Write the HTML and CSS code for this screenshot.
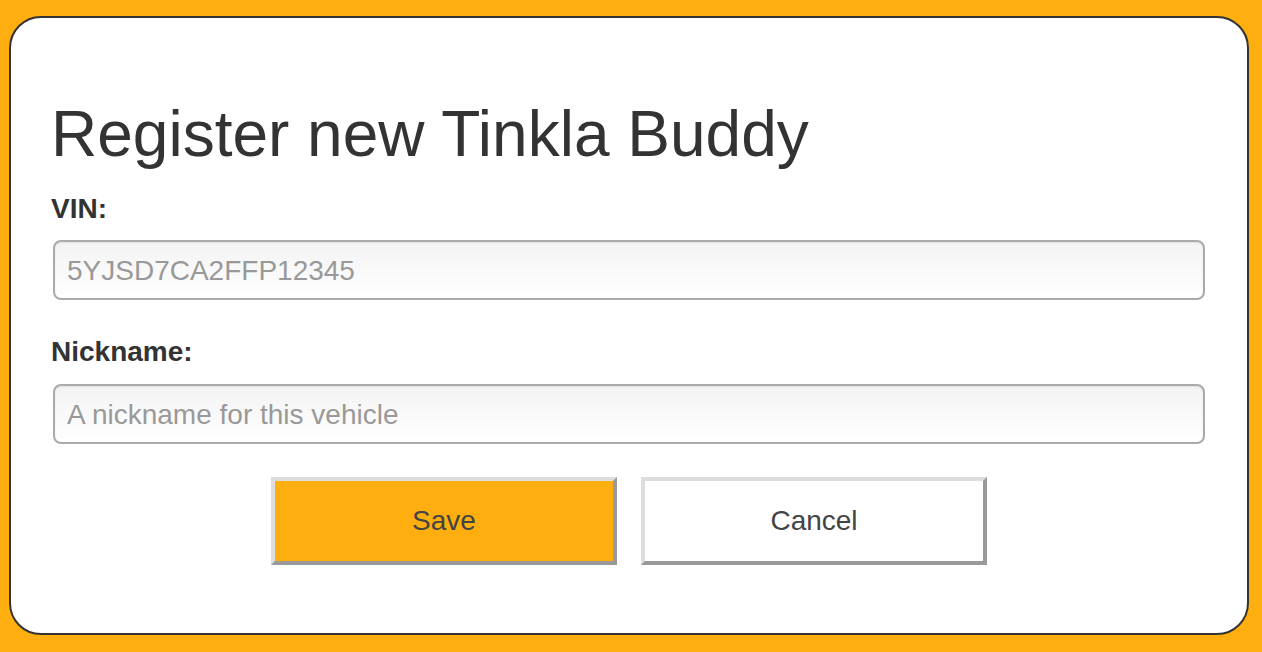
FILE: index.html
```
<!DOCTYPE html>
<html lang="en">
<head>
    <meta charset="UTF-8">
    <meta name="viewport" content="width=device-width, initial-scale=1.0">
    <title>Register new Tinkla Buddy</title>
    <link rel="stylesheet" href="styles.css">
</head>
<body>

    <div class="page">
        <div class="card">
            <h1>Register new Tinkla Buddy</h1>

            <form class="buddy-form">
                <label for="vin">VIN:</label>
                <input type="text" id="vin" placeholder="5YJSD7CA2FFP12345">

                <label for="nickname">Nickname:</label>
                <input type="text" id="nickname" placeholder="A nickname for this vehicle">

                <div class="actions">
                    <button type="button" class="btn btn-save">Save</button>
                    <button type="button" class="btn btn-cancel">Cancel</button>
                </div>
            </form>
        </div>
    </div>

</body>
</html>
```

FILE: styles.css
```
body {
    margin: 0;
    padding: 0;
    background: #ffae0f;
    font-family: 'Liberation Sans', Arial, sans-serif;
    color: #333;
}
.page {
    padding: 16px 13px 17px 9px;
}
.card {
    box-sizing: border-box;
    width: 1240px;
    height: 619px;
    background: #fff;
    border: 2px solid #333;
    border-radius: 32px;
    padding: 79px 40px 0 40px;
}
h1 {
    margin: 0 0 22px 0;
    font-size: 64px;
    font-weight: normal;
    line-height: normal;
    color: #333;
}
.buddy-form label {
    display: block;
    font-size: 28px;
    font-weight: bold;
    line-height: 32px;
    margin-bottom: 15px;
}
.buddy-form input[type="text"] {
    display: block;
    box-sizing: border-box;
    width: calc(100% - 4px);
    height: 60px;
    margin: 0 2px 36px 2px;
    padding: 2px 12px 0 12px;
    font-family: inherit;
    font-size: 28px;
    color: #333;
    border: 2px solid #aaa;
    border-radius: 8px;
    background: linear-gradient(#f3f3f3, #fff);
    box-shadow: inset 0 1px 2px rgba(0, 0, 0, 0.08);
    outline: none;
}
.buddy-form input::placeholder {
    color: #999;
}
.buddy-form input#nickname {
    margin-top: 16px;
    margin-bottom: 33px;
}
.buddy-form label[for="nickname"] {
    margin-bottom: 0;
}
.actions {
    display: flex;
    justify-content: center;
    gap: 24px;
}
.btn {
    box-sizing: border-box;
    width: 346px;
    height: 88px;
    font-family: inherit;
    font-size: 28px;
    color: #444;
    border-style: solid;
    border-width: 4px;
    border-color: #ddd #999 #999 #ddd;
    border-radius: 0;
    cursor: pointer;
}
.btn-save {
    background: #ffae0f;
}
.btn-cancel {
    background: #fff;
}
```
